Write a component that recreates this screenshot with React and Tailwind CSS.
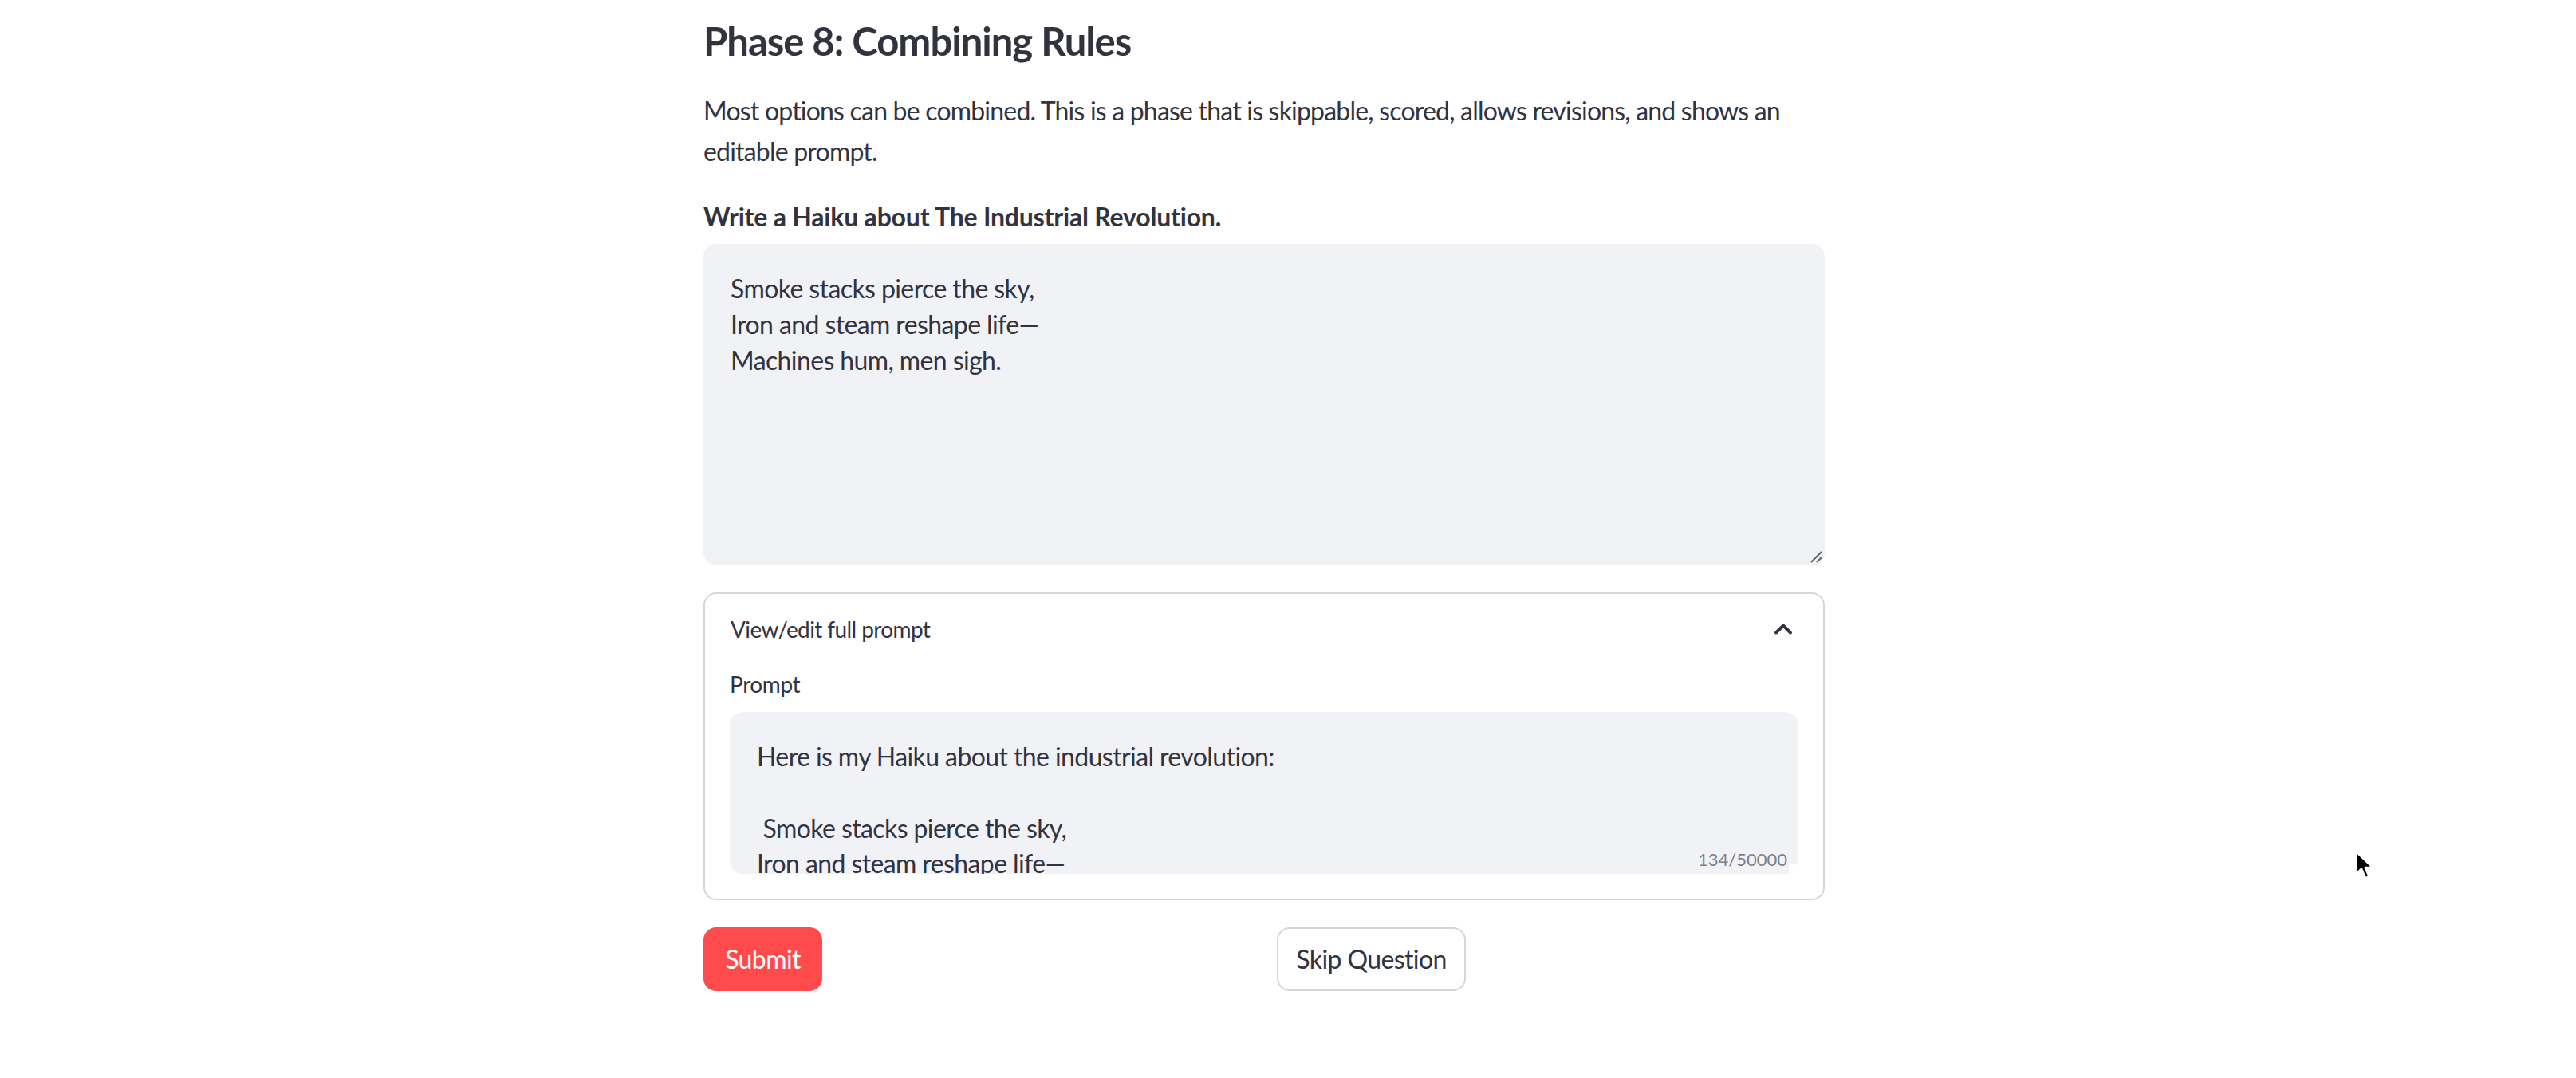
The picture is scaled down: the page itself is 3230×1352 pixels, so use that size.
import React from 'react';
import { ChevronUp } from 'lucide-react';

const haiku = ['Smoke stacks pierce the sky,', 'Iron and steam reshape life—', 'Machines hum, men sigh.'];

const promptText =
  'Here is my Haiku about the industrial revolution:\n\n Smoke stacks pierce the sky,\nIron and steam reshape life—\nMachines hum, men sigh.';

const ResizeGrip = () => (
  <svg className="absolute bottom-[3px] right-[3px] w-[16px] h-[16px]" viewBox="0 0 16 16">
    <path d="M2 15 L15 2 M9 15 L15 9" stroke="#5f6068" strokeWidth="2" fill="none" />
  </svg>
);

const App = () => {
  return (
    <div className="relative min-h-screen bg-white text-[#31333f] font-['Lato','Noto_Sans',sans-serif]">
      <div className="ml-[882px] w-[1406px] pt-[20px]">
        {/* HEADER */}
        <h3 className="text-[49px] font-bold leading-[62px] tracking-[-1px]">Phase 8: Combining Rules</h3>
        <p className="mt-[31px] text-[32px] leading-[51px] tracking-[-0.8px]">
          Most options can be combined. This is a phase that is skippable, scored, allows revisions, and shows an
          editable prompt.
        </p>

        {/* ANSWER */}
        <p className="mt-[35px] text-[32px] font-bold leading-[44px] tracking-[-0.2px]">
          Write a Haiku about The Industrial Revolution.
        </p>
        <div className="relative mt-[12px] h-[403px] rounded-[16px] bg-[#f0f2f6] px-[34px] py-[34px] text-[32px] leading-[44.8px] tracking-[-0.6px]">
          {haiku.map((line, i) => (
            <div key={i}>{line}</div>
          ))}
          <ResizeGrip />
        </div>

        {/* EXPANDER */}
        <div className="mt-[34px] rounded-[16px] border-2 border-[#d6d6d9]">
          <div className="flex h-[88px] items-center justify-between pl-[32px] pr-[32px]">
            <span className="text-[28px] tracking-[-0.6px]">View/edit full prompt</span>
            <ChevronUp className="w-[36px] h-[36px] text-[#31333f]" strokeWidth={2.6} />
          </div>
          <div className="px-[31px] pb-[31px]">
            <div className="mt-[5px] h-[40px] flex items-center text-[28px] tracking-[-0.4px]">Prompt</div>
            <div className="relative mt-[15px] h-[203px] overflow-hidden rounded-[16px] bg-[#f0f2f6]">
              <div className="whitespace-pre-wrap px-[34px] pt-[34px] text-[32px] leading-[44.8px] tracking-[-0.6px]">
                {promptText}
              </div>
              <span className="absolute bottom-[7px] right-[14px] text-[22px] leading-none text-[#7d7f87]">
                134/50000
              </span>
              <div className="absolute bottom-0 right-0 w-[12px] h-[12px] bg-white">
                <svg className="w-[12px] h-[12px]" viewBox="0 0 12 12">
                  <path d="M6 10 L10 6" stroke="#777" strokeWidth="1" />
                </svg>
              </div>
            </div>
          </div>
        </div>

        {/* ACTIONS */}
        <div className="mt-[34px] grid grid-cols-2 gap-[32px]">
          <div>
            <button className="flex h-[80px] w-[149px] items-center justify-center rounded-[16px] bg-[#ff4b4b] text-[32px] text-white tracking-[-0.6px]">
              Submit
            </button>
          </div>
          <div>
            <button className="flex h-[80px] w-[237px] items-center justify-center rounded-[16px] border-2 border-[#d6d6d9] bg-white text-[32px] tracking-[-0.6px]">
              Skip Question
            </button>
          </div>
        </div>
      </div>

      {/* mouse pointer */}
      <svg className="absolute left-[2952px] top-[1066px] w-[26px] h-[38px]" viewBox="0 0 13 19">
        <path d="M1 1 L1 15 L4.5 11.8 L7 17.5 L9.2 16.5 L6.8 11 L11.5 11 Z" fill="#000" stroke="#fff" strokeWidth="1.2" strokeLinejoin="round" />
      </svg>
    </div>
  );
};

export default App;
